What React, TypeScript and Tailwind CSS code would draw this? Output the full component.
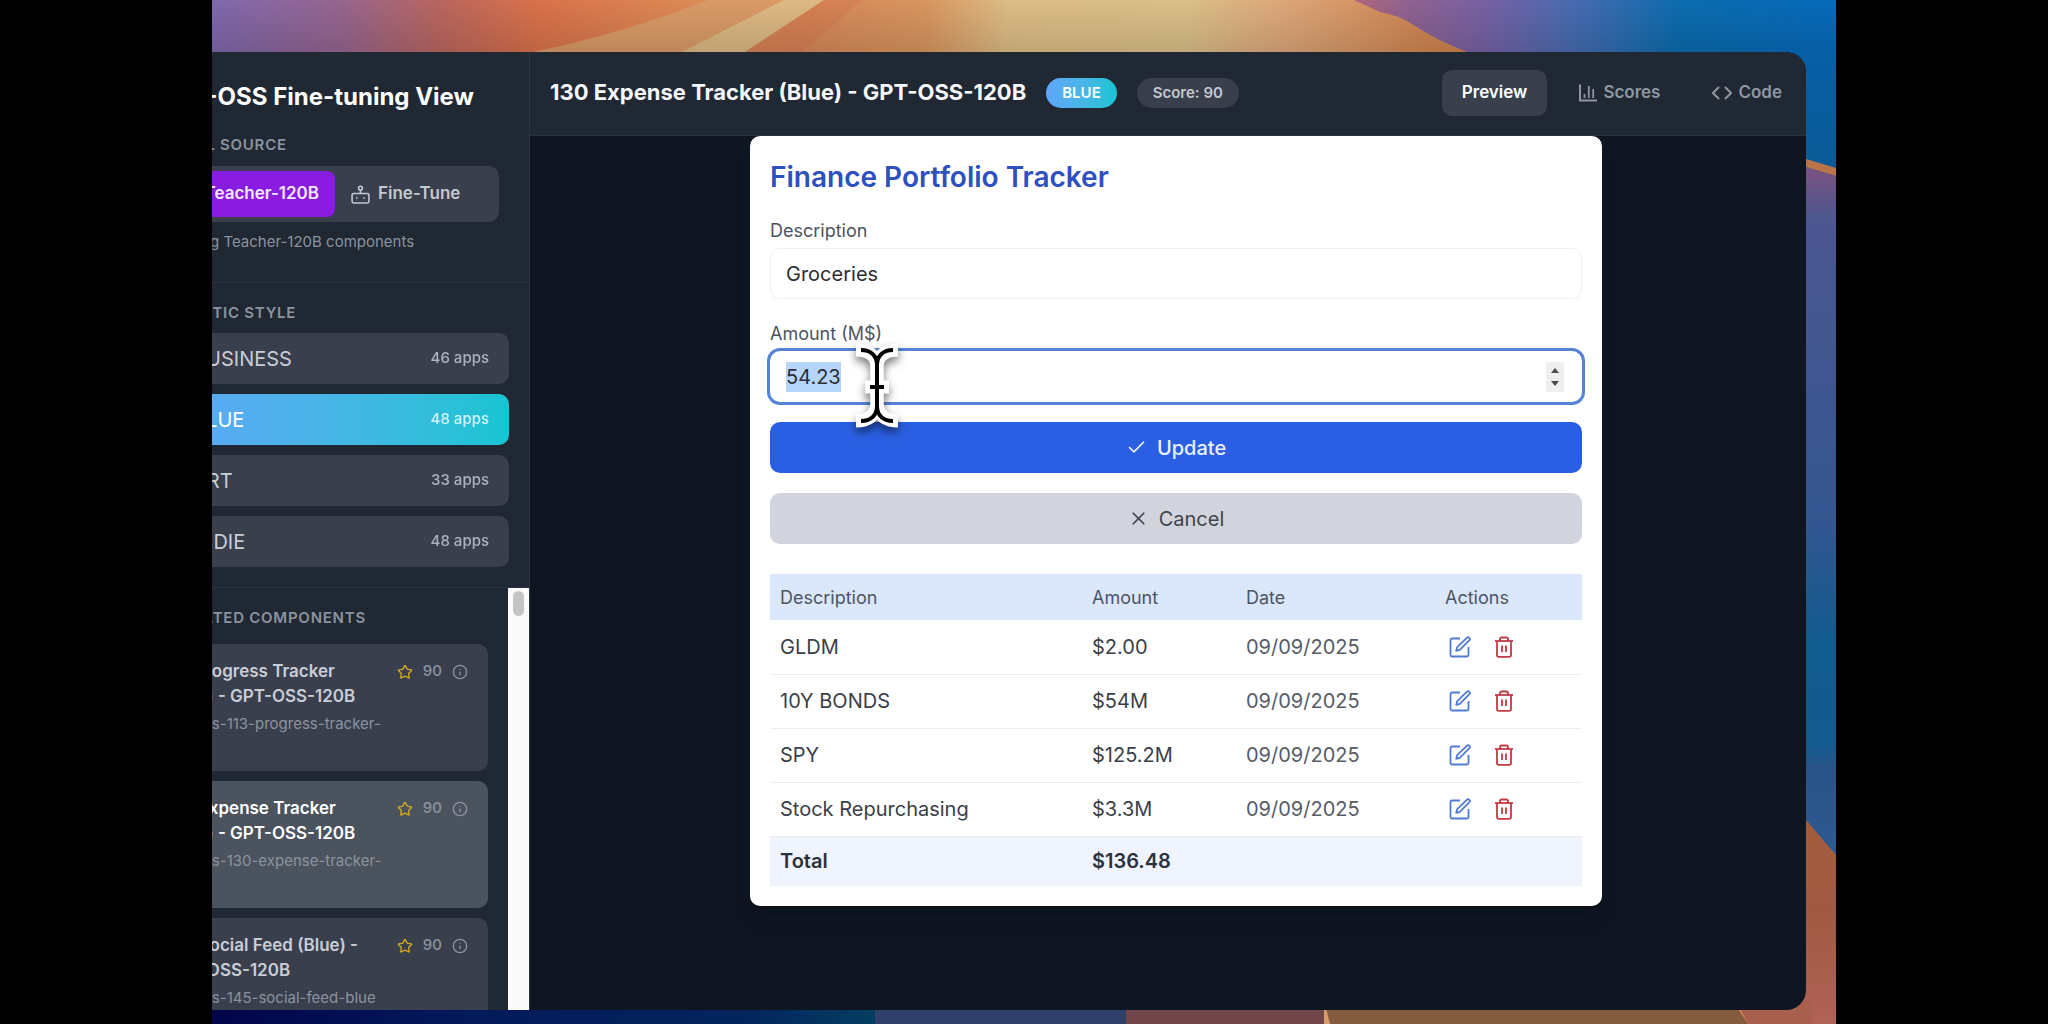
import { useEffect, useRef, useState } from "react";
import { FiCheck, FiX } from "react-icons/fi";
import { Info, Star } from "lucide-react";

const styles = [
  { id: "business", label: "BUSINESS", count: 46 },
  { id: "blue", label: "BLUE", count: 48 },
  { id: "art", label: "ART", count: 33 },
  { id: "indie", label: "INDIE", count: 48 },
];

const components = [
  { id: 113, title: "113 Progress Tracker (Blue) - GPT-OSS-120B", slug: "gpt-oss-113-progress-tracker-blue", score: 90 },
  { id: 130, title: "130 Expense Tracker (Blue) - GPT-OSS-120B", slug: "gpt-oss-130-expense-tracker-blue", score: 90 },
  { id: 145, title: "145 Social Feed (Blue) - GPT-OSS-120B", slug: "gpt-oss-145-social-feed-blue", score: 90 },
];

const expenses = [
  { description: "GLDM", amount: "$2.00", date: "09/09/2025" },
  { description: "10Y BONDS", amount: "$54M", date: "09/09/2025" },
  { description: "SPY", amount: "$125.2M", date: "09/09/2025" },
  { description: "Stock Repurchasing", amount: "$3.3M", date: "09/09/2025" },
];

function Wallpaper() {
  return (
    <svg className="absolute inset-0 h-full w-full" viewBox="0 0 1624 1024" preserveAspectRatio="none" aria-hidden="true">
      <defs>
        <linearGradient id="sky" gradientUnits="userSpaceOnUse" x1="0" x2="1624" y1="0" y2="0">
          <stop offset="0" stopColor="#7f68ac" />
          <stop offset="0.08" stopColor="#96658f" />
          <stop offset="0.14" stopColor="#b9665f" />
          <stop offset="0.2" stopColor="#d9714a" />
          <stop offset="0.3" stopColor="#dd8b56" />
          <stop offset="0.36" stopColor="#d58658" />
          <stop offset="0.44" stopColor="#d8955f" />
          <stop offset="0.49" stopColor="#dcbc85" />
          <stop offset="0.6" stopColor="#dabf88" />
          <stop offset="0.66" stopColor="#dca679" />
          <stop offset="0.75" stopColor="#cf8450" />
        </linearGradient>
        <linearGradient id="dusk" gradientUnits="userSpaceOnUse" x1="1140" x2="1624" y1="0" y2="30">
          <stop offset="0" stopColor="#b0687a" />
          <stop offset="0.12" stopColor="#8f6290" />
          <stop offset="0.28" stopColor="#7661a4" />
          <stop offset="0.45" stopColor="#4a6bb0" />
          <stop offset="0.68" stopColor="#0b6cae" />
          <stop offset="1" stopColor="#076abb" />
        </linearGradient>
        <linearGradient id="deep" x1="0" x2="0" y1="0" y2="1">
          <stop offset="0" stopColor="#075fa6" />
          <stop offset="1" stopColor="#0a5a94" />
        </linearGradient>
        <linearGradient id="side" x1="0" x2="0" y1="0" y2="1">
          <stop offset="0" stopColor="#7f5280" />
          <stop offset="0.08" stopColor="#4c5690" />
          <stop offset="0.5" stopColor="#345690" />
          <stop offset="0.68" stopColor="#115b8e" />
          <stop offset="0.82" stopColor="#135a8e" />
          <stop offset="0.86" stopColor="#2a5488" />
          <stop offset="1" stopColor="#2e5a94" />
        </linearGradient>
        <linearGradient id="clay" x1="0" x2="0" y1="0" y2="1">
          <stop offset="0" stopColor="#a75d3c" />
          <stop offset="0.5" stopColor="#a05a42" />
          <stop offset="1" stopColor="#b06256" />
        </linearGradient>
        <linearGradient id="shade" x1="0" x2="0" y1="0" y2="1">
          <stop offset="0" stopColor="#000" stopOpacity="0" />
          <stop offset="1" stopColor="#000" stopOpacity="0.12" />
        </linearGradient>
        <linearGradient id="sea" x1="0" x2="1" y1="0" y2="0">
          <stop offset="0" stopColor="#02044a" />
          <stop offset="0.35" stopColor="#03185a" />
          <stop offset="0.8" stopColor="#03255c" />
          <stop offset="1" stopColor="#043d62" />
        </linearGradient>
      </defs>
      <rect width="1624" height="1024" fill="url(#sky)" />
      <path d="M496 0 C440 22 380 40 321 52 L533 52 L612 0Z" fill="#d99a66" />
      <path d="M572 0 L470 52 L533 52 L612 0Z" fill="#dcb883" />
      <path d="M612 0 L533 52 L590 52 L650 0Z" fill="#d67c50" opacity="0.6" />
      <path d="M1142 0 L1168 12 Q1186 15 1200 24 Q1225 41 1258 53 L1624 60 L1624 0Z" fill="url(#dusk)" />
      <rect width="1624" height="52" fill="url(#shade)" />
      <rect x="1580" y="52" width="44" height="130" fill="url(#deep)" />
      <path d="M1580 154 L1594 159 L1624 168 L1624 176 L1580 163Z" fill="#bb7448" />
      <path d="M1580 163 L1624 176 L1624 870 L1580 815Z" fill="url(#side)" />
      <path d="M1580 803 L1594 820 L1624 855 L1624 1024 L1560 1024Z" fill="url(#clay)" />
      <rect y="1000" width="664" height="24" fill="url(#sea)" />
      <rect x="663" y="1000" width="251" height="24" fill="#30406a" />
      <rect x="914" y="1000" width="198" height="24" fill="#70464a" />
      <path d="M1112 1000 H1520 L1536 1024 H1118Z" fill="#835c40" />
      <path d="M1524 1000 H1600 V1024 H1536Z" fill="#a95f4e" />
    </svg>
  );
}

function RobotIcon() {
  return (
    <svg width="19" height="19" viewBox="0 0 18 18" fill="none" stroke="currentColor" strokeWidth="1.5" aria-hidden="true">
      <rect x="1" y="8" width="16" height="9" rx="1.5" />
      <path d="M9 5V8" />
      <circle cx="9" cy="3" r="1.8" />
      <path d="M5.5 11.5V13 M12.5 11.5V13" />
    </svg>
  );
}

function ChartIcon() {
  return (
    <svg width="18" height="18" viewBox="0 0 18 18" fill="none" stroke="currentColor" strokeWidth="2" aria-hidden="true">
      <path d="M1 0.5V16.5H18" />
      <path d="M5.5 10V14 M9.8 2V14 M14.2 5V14" strokeWidth="1.8" />
    </svg>
  );
}

function EditIcon() {
  return (
    <svg width="22" height="22" viewBox="0 0 22 22" fill="none" stroke="currentColor" strokeWidth="1.8" strokeLinejoin="round" aria-hidden="true">
      <path d="M11 2.5H3A1.5 1.5 0 0 0 1.5 4V19A1.5 1.5 0 0 0 3 20.5H18A1.5 1.5 0 0 0 19.5 19V11" />
      <path d="M18 1.7a1.7 1.7 0 0 1 2.4 2.4L10.8 13.8 7.2 14.8 8.2 11.2Z" />
    </svg>
  );
}

function TrashIcon() {
  return (
    <svg width="20" height="22" viewBox="0 0 20 22" fill="none" stroke="currentColor" strokeWidth="1.8" aria-hidden="true">
      <path d="M1 5H19" />
      <path d="M6 5V3A1.5 1.5 0 0 1 7.5 1.5H12.5A1.5 1.5 0 0 1 14 3V5" />
      <path d="M3 5V19A1.8 1.8 0 0 0 4.8 20.8H15.2A1.8 1.8 0 0 0 17 19V5" />
      <path d="M8 9.5V16 M12 9.5V16" />
    </svg>
  );
}

function TextCursor() {
  return (
    <svg className="pointer-events-none absolute top-[-10px] left-[83px] h-[92px] w-[48px] drop-shadow-[0_5px_4px_rgba(0,0,0,0.5)]" viewBox="0 0 48 92" fill="none" aria-hidden="true">
      <g stroke="#fff" strokeWidth="13">
        <path d="M3 9 C14 9 24 13 24 27 V61 C24 75 14 80 3 80" />
        <path d="M45 9 C34 9 24 13 24 27 V61 C24 75 34 80 45 80" />
        <path d="M12 46 H36" />
      </g>
      <g stroke="#000" strokeWidth="4">
        <path d="M8 9 C17 9 24 14 24 24 V65 C24 75 17 80 8 80" />
        <path d="M40 9 C31 9 24 14 24 24 V65 C24 75 31 80 40 80" />
        <path d="M17 46 H31" />
      </g>
    </svg>
  );
}

function Sidebar() {
  const [style, setStyle] = useState("blue");

  return (
    <aside className="-ml-[84px] flex w-[402px] flex-none flex-col border-r border-[#2d3743] bg-[#1f2833]">
      <div className="border-b border-[#2a3440] px-[30px] py-[30px]">
        <h1 className="text-[24px] leading-[30px] font-bold whitespace-nowrap text-white">GPT-OSS Fine-tuning View</h1>
        <h2 className="mt-[23px] text-[15px] leading-5 font-semibold tracking-wider text-[#8c939e]">MODEL SOURCE</h2>
        <div className="mt-[11px] flex rounded-[10px] bg-[#393f4d] p-[5px]">
          <button className="flex h-[46px] w-[172px] items-center justify-end rounded-lg bg-[#8a1be0] px-4 text-[17px] font-semibold text-[#f3e8ff]">
            Teacher-120B
          </button>
          <button className="flex h-[46px] flex-1 items-center gap-2 rounded-lg px-4 text-[17px] font-semibold text-[#c3c8d1]">
            <RobotIcon />
            Fine-Tune
          </button>
        </div>
        <p className="mt-[10px] text-[15px] leading-5 text-[#8c939e]">Showing Teacher-120B components</p>
      </div>

      <div className="border-b border-[#2a3440] p-5">
        <h2 className="text-[15px] leading-5 font-semibold tracking-wider text-[#8c939e]">AESTHETIC STYLE</h2>
        <div className="mt-[10px] flex flex-col gap-[10px]">
          {styles.map((s) => (
            <button
              key={s.id}
              onClick={() => setStyle(s.id)}
              className={
                s.id === style
                  ? "flex h-[51px] items-center justify-between rounded-[10px] bg-linear-to-r from-[#60a5fa] to-[#14c4d2] pr-5 pl-[45px] text-white"
                  : "flex h-[51px] items-center justify-between rounded-[10px] bg-[#393f4d] pr-5 pl-[45px] text-[#c9cdd6]"
              }
            >
              <span className="text-[20px]">{s.label}</span>
              <span className="text-[15px] font-medium opacity-80">{s.count} apps</span>
            </button>
          ))}
        </div>
      </div>

      <div className="flex min-h-0 flex-1">
        <div className="min-w-0 flex-1 overflow-hidden p-5">
          <h2 className="text-[15px] leading-5 font-semibold tracking-wider text-[#8c939e]">GENERATED COMPONENTS</h2>
          <div className="mt-4 flex flex-col gap-[10px]">
            {components.map((c) => (
              <article
                key={c.id}
                className={
                  c.id === 130
                    ? "flex h-[127px] flex-none justify-between rounded-[10px] bg-[#4b535f] pr-5 pl-[17px] py-[15px] text-white"
                    : "flex h-[127px] flex-none justify-between rounded-[10px] bg-[#393f4d] pr-5 pl-[17px] py-[15px] text-[#c9cdd6]"
                }
              >
                <div className="w-[222px] flex-none">
                  <h3 className="text-[17px] leading-[25px] font-semibold">{c.title}</h3>
                  <p className="mt-[5px] text-[15px] leading-5 text-[#8c939e]">{c.slug}</p>
                </div>
                <div className="flex h-[25px] items-center gap-[10px] text-[15px] font-medium text-[#8c939e]">
                  <Star size={16} className="text-[#d3a91f]" />
                  {c.score}
                  <Info size={16} />
                </div>
              </article>
            ))}
          </div>
        </div>
        <div className="w-[21px] flex-none bg-[#fafafa] pt-[3px]">
          <div className="mx-auto h-[25px] w-[11px] rounded-full bg-[#c4c4c4]" />
        </div>
      </div>
    </aside>
  );
}

function ExpenseCard() {
  const [description, setDescription] = useState("Groceries");
  const [amount, setAmount] = useState("54.23");
  const amountRef = useRef<HTMLInputElement>(null);

  useEffect(() => {
    amountRef.current?.focus();
    amountRef.current?.select();
  }, []);

  return (
    <section className="w-full rounded-[10px] bg-white p-5 shadow-xl">
      <h2 className="text-[28px] leading-[42px] font-semibold text-[#2d4fc0]">Finance Portfolio Tracker</h2>

      <form onSubmit={(e) => e.preventDefault()}>
        <label htmlFor="description" className="mt-5 block text-[18px] leading-[25px] text-[#4d535e]">
          Description
        </label>
        <input
          id="description"
          value={description}
          onChange={(e) => setDescription(e.target.value)}
          className="mt-[5px] block h-[51px] w-full rounded-[10px] border border-[#f0f0f1] px-[15px] text-[20px] text-[#2b2e33] outline-none"
        />

        <label htmlFor="amount" className="mt-[22px] block text-[18px] leading-[25px] text-[#4d535e]">
          Amount (M$)
        </label>
        <div className="relative mt-[5px] flex h-[51px] items-center rounded-[10px] pr-[18px] pl-4 ring-[3px] ring-[#5683d6]">
          <input
            id="amount"
            ref={amountRef}
            type="number"
            step="0.01"
            value={amount}
            onChange={(e) => setAmount(e.target.value)}
            className="h-[30px] min-w-0 flex-1 appearance-none text-[20px] text-[#2b2e33] outline-none selection:bg-[#b5d5fb] selection:text-[#2b2e33] [&::-webkit-inner-spin-button]:appearance-none"
          />
          <span className="flex h-[30px] w-[18px] flex-col items-center justify-center gap-2 bg-[#efefef]" aria-hidden="true">
            <svg width="8" height="5" viewBox="0 0 8 5"><path d="M0 5 L4 0 L8 5Z" fill="#4d4d4d" /></svg>
            <svg width="8" height="5" viewBox="0 0 8 5"><path d="M0 0 L4 5 L8 0Z" fill="#4d4d4d" /></svg>
          </span>
          <TextCursor />
        </div>

        <button type="submit" className="mt-5 flex h-[51px] w-full items-center justify-center gap-[10px] rounded-[10px] bg-[#2b5fe3] text-[20px] font-medium text-[#eaf1ff]">
          <FiCheck size={21} />
          Update
        </button>
        <button type="button" className="mt-5 flex h-[51px] w-full items-center justify-center gap-[10px] rounded-[10px] bg-[#d1d4dc] text-[20px] text-[#3f444e]">
          <FiX size={21} />
          Cancel
        </button>
      </form>

      <table className="mt-[30px] w-full table-fixed border-collapse text-left text-[20px] text-[#3a3f48]">
        <colgroup>
          <col />
          <col className="w-[154px]" />
          <col className="w-[199px]" />
          <col className="w-[147px]" />
        </colgroup>
        <thead>
          <tr className="h-[46px] bg-[#dbe7fa] text-[18px] text-[#4b5565]">
            <th className="px-[10px] font-normal">Description</th>
            <th className="px-[10px] font-normal">Amount</th>
            <th className="px-[10px] font-normal">Date</th>
            <th className="px-[10px] font-normal">Actions</th>
          </tr>
        </thead>
        <tbody>
          {expenses.map((e) => (
            <tr key={e.description} className="h-[54px] border-b border-[#ededee]">
              <td className="px-[10px]">{e.description}</td>
              <td className="px-[10px]">{e.amount}</td>
              <td className="px-[10px] text-[#575c66]">{e.date}</td>
              <td className="px-[10px]">
                <div className="flex items-center gap-[23px] pl-1">
                  <button aria-label={`Edit ${e.description}`} className="text-[#4f7bd0]">
                    <EditIcon />
                  </button>
                  <button aria-label={`Delete ${e.description}`} className="text-[#c23a44]">
                    <TrashIcon />
                  </button>
                </div>
              </td>
            </tr>
          ))}
        </tbody>
        <tfoot>
          <tr className="h-[50px] bg-[#eff4fe] font-semibold text-[#2b313b]">
            <td className="px-[10px]">Total</td>
            <td className="px-[10px]">$136.48</td>
            <td colSpan={2} />
          </tr>
        </tfoot>
      </table>
    </section>
  );
}

export default function App() {
  return (
    <div className="flex h-screen bg-black px-[212px] font-['Inter',sans-serif]">
      <div className="relative flex flex-1 overflow-hidden pt-[52px] pr-[30px] pb-[14px]">
        <Wallpaper />
        <div className="relative flex min-w-0 flex-1 overflow-hidden rounded-r-[20px] bg-[#0f1622]">
          <Sidebar />
          <main className="-mr-4 flex min-w-0 flex-1 flex-col">
            <header className="flex h-[84px] flex-none items-center justify-between border-b border-[#2a3440] bg-[#1f2833] px-5 pb-[2px]">
              <div className="flex items-center gap-5">
                <h2 className="text-[22px] font-bold whitespace-nowrap text-[#f5f7fa]">130 Expense Tracker (Blue) - GPT-OSS-120B</h2>
                <span className="rounded-full bg-linear-to-r from-[#60a5fa] to-[#14c4d2] px-4 py-[5px] text-[15px] leading-5 font-semibold text-white">BLUE</span>
                <span className="rounded-full bg-[#393f4d] px-4 py-[5px] text-[15px] leading-5 font-semibold text-[#c3c8d1]">Score: 90</span>
              </div>
              <nav className="flex gap-3 text-[17px] font-semibold text-[#8f96a1]">
                <button className="h-[46px] rounded-[10px] bg-[#393f4d] px-5 text-white">Preview</button>
                <button className="flex h-[46px] items-center gap-[6px] rounded-[10px] px-5">
                  <ChartIcon />
                  Scores
                </button>
                <button className="flex h-[46px] items-center gap-[6px] rounded-[10px] px-5">
                  <svg width="20" height="18" viewBox="0 0 20 18" fill="none" stroke="currentColor" strokeWidth="2" aria-hidden="true">
                    <path d="M7 3 L1 9 L7 15 M13 3 L19 9 L13 15" />
                  </svg>
                  Code
                </button>
              </nav>
            </header>
            <div className="flex min-h-0 flex-1 justify-center">
              <div className="w-full max-w-[852px]">
                <ExpenseCard />
              </div>
            </div>
          </main>
        </div>
      </div>
    </div>
  );
}
